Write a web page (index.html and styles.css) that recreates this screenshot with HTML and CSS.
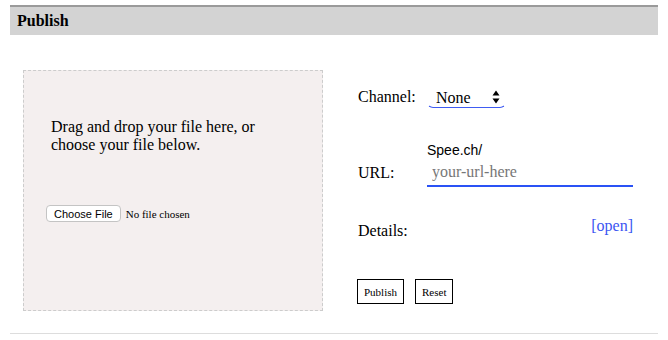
FILE: index.html
```html
<!DOCTYPE html>
<html>
<head>
<meta charset="utf-8">
<link rel="stylesheet" href="styles.css">
</head>
<body>
<div class="page">
  <div class="header">Publish</div>
  <div class="main">
    <div class="dropzone">
      <p class="drop-text">Drag and drop your file here, or choose your file below.</p>
      <input class="file-input" type="file">
    </div>
    <div class="form">
      <div class="row row-channel">
        <label class="label">Channel:</label>
        <div class="select-wrap">
          <select class="select"><option>None</option></select>
          <svg class="select-arrows" width="8" height="14" viewBox="0 0 8 14"><path d="M4 0.5 L7.5 5.5 L0.5 5.5 Z M0.5 8.5 L7.5 8.5 L4 13.5 Z" fill="#000"/></svg>
        </div>
      </div>
      <div class="row-url">
        <span class="prefix">Spee.ch/</span>
        <label class="label url-label">URL:</label>
        <input class="url-input" type="text" placeholder="your-url-here">
      </div>
      <div class="row-details">
        <span class="label">Details:</span>
        <a class="open-link" href="#">[open]</a>
      </div>
      <div class="actions">
        <button class="btn">Publish</button>
        <button class="btn">Reset</button>
      </div>
    </div>
  </div>
</div>
</body>
</html>
```

FILE: styles.css
```css
html, body {
  margin: 0;
  padding: 0;
  background: #fff;
}
body {
  font-family: "Liberation Serif", "Times New Roman", serif;
  font-size: 16px;
  color: #000;
}
.page {
  padding: 5px 10px 0 10px;
}
.header {
  border-top: 2px solid #9a9a9a;
  background: #d3d3d3;
  height: 28px;
  line-height: 28px;
  padding-left: 7px;
  font-weight: bold;
  font-size: 16px;
}
.main {
  display: flex;
  align-items: flex-start;
  padding: 35px 0 22px 13px;
  border-bottom: 1px solid #dddddd;
}
.dropzone {
  box-sizing: border-box;
  width: 300px;
  height: 241px;
  border: 1px dashed #cccccc;
  background: #f4efef;
  padding: 47px 27px 0 27px;
  flex: none;
}
.drop-text {
  margin: 0;
  font-size: 16px;
  line-height: 18px;
}
.file-input {
  display: block;
  margin: 51px 0 0 -5px;
  font-family: "Liberation Serif", "Times New Roman", serif;
  font-size: 11px;
  color: #000;
}
.file-input::file-selector-button {
  font-family: "Liberation Sans", Arial, sans-serif;
  font-size: 11px;
  height: 17px;
  padding: 0 7px;
  margin-right: 5px;
  background: #fff;
  border: 1px solid #c4c4c4;
  border-radius: 4px;
  color: #000;
}
.form {
  margin-left: 35px;
  width: 275px;
  flex: none;
}
.label {
  width: 69px;
  line-height: 18px;
  flex: none;
}
.row-channel {
  display: flex;
  align-items: center;
  margin-top: 16px;
  height: 22px;
}
.select-wrap {
  position: relative;
  width: 79px;
  height: 22px;
}
.select {
  appearance: none;
  -webkit-appearance: none;
  box-sizing: border-box;
  width: 79px;
  height: 22px;
  padding: 0 0 0 8px;
  margin: 0;
  border: 1px solid transparent;
  border-bottom: 1px solid #3f5cf2;
  border-radius: 6px;
  background: transparent;
  font-family: "Liberation Serif", "Times New Roman", serif;
  font-size: 16px;
  color: #000;
}
.select-arrows {
  position: absolute;
  right: 6px;
  top: 4px;
  pointer-events: none;
}
.row-url {
  display: grid;
  grid-template-columns: 69px 1fr;
  margin-top: 34px;
}
.prefix {
  grid-column: 2;
  grid-row: 1;
  font-family: "Liberation Sans", Arial, sans-serif;
  font-size: 14px;
  line-height: 16px;
}
.url-label {
  grid-column: 1;
  grid-row: 2;
  align-self: center;
}
.url-input {
  grid-column: 2;
  grid-row: 2;
  box-sizing: border-box;
  width: 206px;
  height: 29px;
  padding: 0 5px;
  margin: 0;
  border: none;
  border-bottom: 2px solid #2a52f5;
  background: transparent;
  font-family: "Liberation Serif", "Times New Roman", serif;
  font-size: 16px;
  outline: none;
}
.url-input::placeholder {
  color: #777;
}
.row-details {
  display: flex;
  align-items: flex-start;
  justify-content: space-between;
  margin-top: 35px;
}
.open-link {
  line-height: 18px;
  margin-top: -5px;
  color: #3b55f2;
  text-decoration: none;
}
.actions {
  display: flex;
  gap: 11px;
  margin-top: 39px;
  margin-left: -1px;
}
.btn {
  box-sizing: border-box;
  height: 25px;
  padding: 0 6px;
  margin: 0;
  border: 1px solid #000;
  border-radius: 0;
  background: #fff;
  font-family: "Liberation Serif", "Times New Roman", serif;
  font-size: 11px;
  color: #000;
}
```
